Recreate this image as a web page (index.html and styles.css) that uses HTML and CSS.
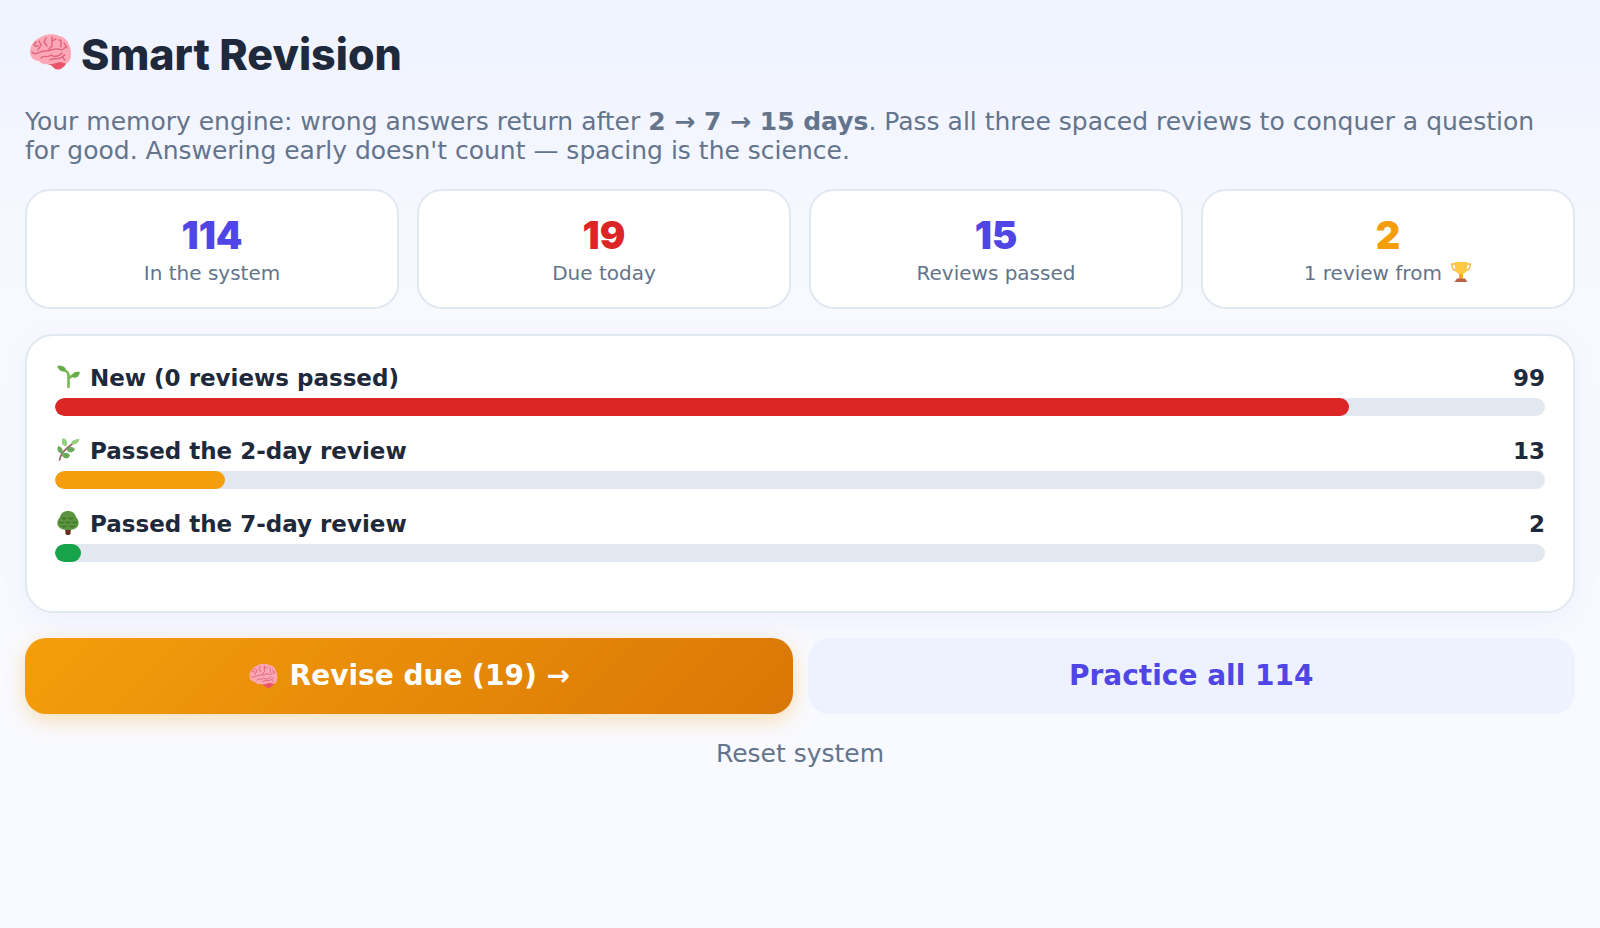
FILE: index.html
```html
<!DOCTYPE html>
<html lang="en">
<head>
<meta charset="utf-8">
<meta name="viewport" content="width=device-width, initial-scale=1">
<title>Smart Revision</title>
<link rel="stylesheet" href="styles.css">
</head>
<body>
<svg class="sprite" aria-hidden="true">
  <symbol id="brain" viewBox="0 0 44 38">
    <path fill="#ea5369" d="M18 29l19-3c3 2 1 7-3 9-4 3-8 1-10-2-2-2-5-1-6-4z"/>
    <path fill="#fca7b5" d="M2 19C2 11 8 6 13 4c4-3 13-4 18-1 6 1 9 5 10 9 3 5 2 12 1 15-2 4-5 4-9 2-4 0-7 3-13 2-4 1-8-1-9-3C6 28 2 24 2 19z"/>
    <g fill="none" stroke="#df647e" stroke-width="1.4" stroke-linecap="round">
      <path d="M4 19c3 4 7 0 12-1 5 1 9-3 14-2 5 2 7-1 8-3M11 8l2 4-3 5M10 13H7M18 5l-2 4 3 4M24 4v9l-3 3M24 8l4-2M31 7c4 0 1 4 2 7M36 10l3 5M13 25c3-4 6 1 10-3 4 3 8 1 11-2M22 27c4-3 8 1 12-3M37 22c-3 0-2 4 0 5M8 9l-2 3"/>
    </g>
  </symbol>
  <symbol id="sprout" viewBox="0 0 24 24">
    <path fill="none" stroke="#78b854" stroke-width="2.6" stroke-linecap="round" d="M12.500 22V11c0-4-2-5-5-6M12.500 14c1-2 3-3 5-4"/>
    <path fill="#65ad49" d="M1 1c6-1 8 1 9 4-3 3-7 1-9-4zM24 7c-1 5-4 7-8 5 0-4 3-6 8-5z"/>
  </symbol>
  <symbol id="herb" viewBox="0 0 24 24">
    <path fill="none" stroke="#97606b" stroke-width="1.6" stroke-linecap="round" d="M3.500 22C5 14 12 9 19 4"/>
    <path fill="#94d080" d="M23.500 1c-1 5-5 6.500-8.500 4.500 1-3.500 4.500-4.500 8.500-4.500zM7 0c5 2 5 6 3 8.500C5 7 5 3 7 0z"/>
    <path fill="#69a958" d="M10.500 11.500c2-4 6.500-3.500 8.500 0-3 4-6.500 3.500-8.500 0zM6 17.500c2-4 6-3 8 0-2 4-6 3.500-8 0zM6 16c-5-2-5-5-4-8 4 1 6 4 4 8z"/>
  </symbol>
  <symbol id="tree" viewBox="0 0 24 24">
    <path fill="#672d1e" d="M9 16h6l-.500 7c-1 1.300-4 1.300-5 0z"/>
    <path fill="#5d943f" d="M4 6C5 2 8 0 12 0s7 2 8 6c3 3 3 7 2 9-2 3-6 4-10 4s-8-1-10-4c-1-2-1-6 2-9z"/>
    <path fill="none" stroke="#397428" stroke-width="1.200" stroke-linecap="round" d="M6 7l2 1 2-1M13 7l2 1 2-1M3 11l2 1 2-1M10 11l2 1 2-1M17 11l2 1 2-1M6 15l2 1 2-1M14 15l2 1 2-1"/>
  </symbol>
  <symbol id="trophy" viewBox="0 0 22 22">
    <path fill="none" stroke="#f5b94f" stroke-width="1.6" d="M5 3H1.800c0 5 2 7 6 7M17 3h3.200c0 5-2 7-6 7"/>
    <path fill="#fdc842" d="M4.500 1h13c0 7-1.500 11-4.500 12v4H9v-4C6 12 4.500 8 4.500 1z"/>
    <path fill="#f3a72e" d="M9 13h4v5H9z"/>
    <path fill="#b86148" d="M7 17.500h8l2.500 3.500h-13z"/>
  </symbol>
</svg>
<main class="page">
  <h1 class="title"><svg class="title-icon" aria-hidden="true"><use href="#brain"/></svg>Smart Revision</h1>
  <p class="intro">Your memory engine: wrong answers return after <strong>2 → 7 → 15 days</strong>. Pass all three spaced reviews to conquer a question for good. Answering early doesn't count — spacing is the science.</p>
  <section class="stats" aria-label="Summary">
    <div class="stat"><span class="stat-value indigo">114</span><span class="stat-label">In the system</span></div>
    <div class="stat"><span class="stat-value red">19</span><span class="stat-label">Due today</span></div>
    <div class="stat"><span class="stat-value indigo">15</span><span class="stat-label">Reviews passed</span></div>
    <div class="stat"><span class="stat-value amber">2</span><span class="stat-label">1 review from <svg class="trophy" role="img" aria-label="trophy"><use href="#trophy"/></svg></span></div>
  </section>
  <section class="panel" aria-label="Review stages">
    <div class="stage">
      <div class="stage-head"><span class="stage-name"><svg class="stage-icon" aria-hidden="true"><use href="#sprout"/></svg>New (0 reviews passed)</span><span>99</span></div>
      <div class="track"><div class="fill fill-red" style="width:86.84%"></div></div>
    </div>
    <div class="stage">
      <div class="stage-head"><span class="stage-name"><svg class="stage-icon" aria-hidden="true"><use href="#herb"/></svg>Passed the 2-day review</span><span>13</span></div>
      <div class="track"><div class="fill fill-amber" style="width:11.4%"></div></div>
    </div>
    <div class="stage">
      <div class="stage-head"><span class="stage-name"><svg class="stage-icon" aria-hidden="true"><use href="#tree"/></svg>Passed the 7-day review</span><span>2</span></div>
      <div class="track"><div class="fill fill-green" style="width:1.75%"></div></div>
    </div>
  </section>
  <div class="actions">
    <button type="button" class="btn btn-primary"><svg class="btn-icon" aria-hidden="true"><use href="#brain"/></svg>Revise due (19) →</button>
    <button type="button" class="btn btn-soft">Practice all 114</button>
  </div>
  <button type="button" class="reset">Reset system</button>
</main>
</body>
</html>
```
FILE: styles.css
```css
* { box-sizing: border-box; }
body {
  margin: 0;
  min-height: 100vh;
  background: linear-gradient(180deg, #eff3ff 0, #f9faff 340px) #f9faff;
  color: #1e293b;
  font-family: "DejaVu Sans", sans-serif;
  font-size: 25px;
}
.sprite { position: absolute; width: 0; height: 0; }
.page { display: flex; flex-direction: column; padding: 25px; }
.title {
  display: flex;
  align-items: center;
  gap: 9px;
  margin: 0;
  padding-left: 3px;
  font-family: Inter, sans-serif;
  font-size: 43px;
  font-weight: 800;
  line-height: 58px;
}
.title-icon { width: 44px; height: 38px; margin-bottom: 4px; }
.intro { margin: 24px 0 0; color: #64748b; line-height: 29px; }
.stats {
  display: grid;
  grid-template-columns: repeat(4, 1fr);
  gap: 18px;
  margin-top: 24px;
}
.stat {
  display: flex;
  flex-direction: column;
  align-items: center;
  padding: 20px;
  background: #fff;
  border: 2px solid #e2e8f0;
  border-radius: 25px;
}
.stat-value {
  font-family: Inter, sans-serif;
  font-size: 38px;
  font-weight: 900;
  line-height: 48px;
}
.stat-label { color: #64748b; font-size: 20px; line-height: 28px; }
.indigo { color: #4f46e5; }
.red { color: #dc2626; }
.amber { color: #f59e0b; }
.trophy { width: 22px; height: 22px; margin-left: 2px; vertical-align: -3px; }
.panel {
  margin-top: 25px;
  padding: 29px 28px 27px;
  background: #fff;
  border: 2px solid #e2e8f0;
  border-radius: 28px;
  box-shadow: 0 6px 32px rgba(79, 70, 229, 0.07);
}
.stage { margin-bottom: 22px; }
.stage-head {
  display: flex;
  justify-content: space-between;
  margin-bottom: 6px;
  font-size: 23px;
  font-weight: 700;
  line-height: 27px;
}
.stage-name { display: flex; gap: 9px; }
.stage-icon { width: 26px; height: 24px; }
.track { height: 18px; overflow: hidden; background: #e2e8f0; border-radius: 9px; }
.fill { height: 100%; border-radius: 9px; }
.fill-red { background: #dc2626; }
.fill-amber { background: #f59e0b; }
.fill-green { background: #16a34a; }
.actions { display: grid; grid-template-columns: 1fr 1fr; gap: 15px; margin-top: 25px; }
.btn {
  display: flex;
  align-items: center;
  justify-content: center;
  gap: 12px;
  padding: 20px;
  border: 0;
  border-radius: 21px;
  font-family: inherit;
  font-size: 28px;
  font-weight: 700;
  line-height: 36px;
  cursor: pointer;
}
.btn-primary {
  background: linear-gradient(135deg, #f59e0b, #d97706);
  color: #fff;
  box-shadow: 0 6px 21px rgba(245, 158, 11, 0.3);
}
.btn-soft { background: #eef2ff; color: #4f46e5; }
.btn-icon { width: 30px; height: 26px; }
.reset {
  align-self: center;
  margin-top: 20px;
  padding: 5px 20px;
  border: 0;
  background: none;
  color: #64748b;
  font-family: inherit;
  font-size: 25px;
  line-height: 29px;
  cursor: pointer;
}
```
